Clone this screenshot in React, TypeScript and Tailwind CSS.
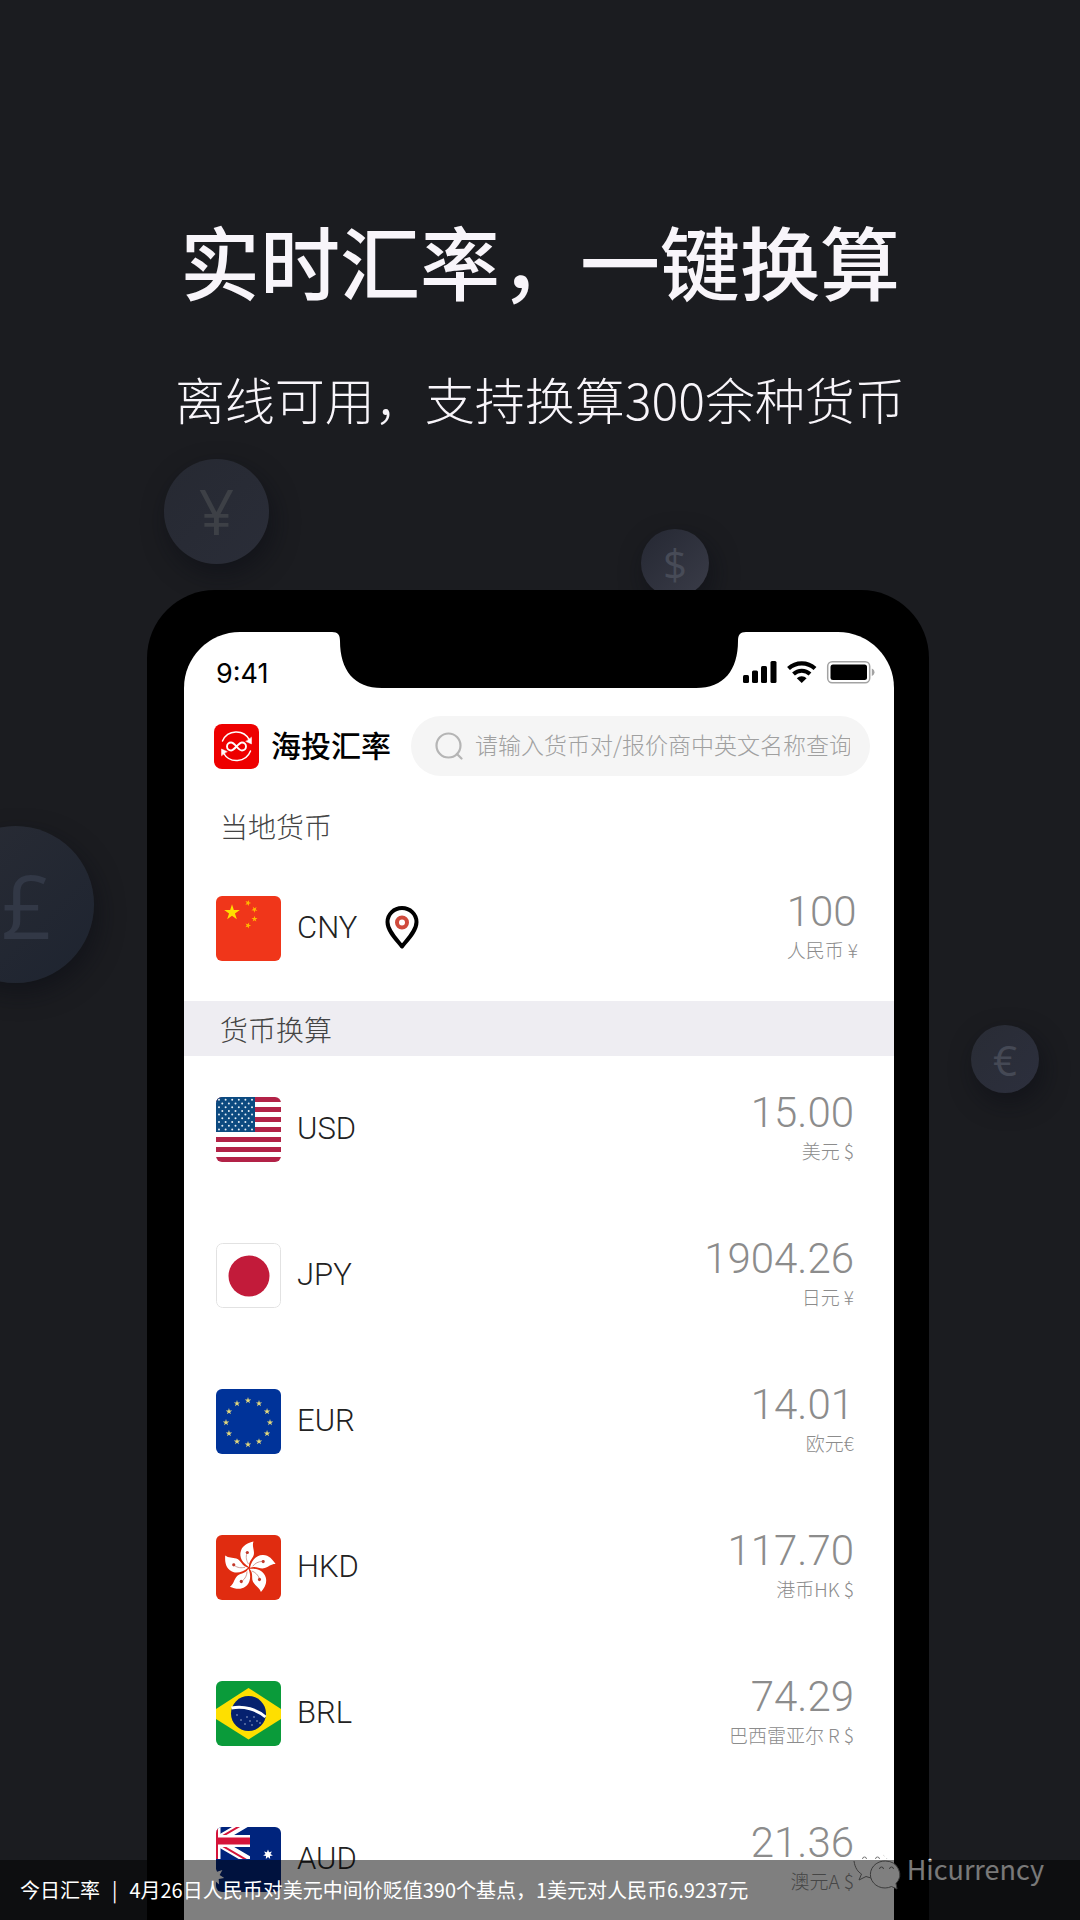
import * as React from "react";
import { clsx } from "clsx";

/**
 * Promo poster for the Hicurrency app: headline, floating coins,
 * and a phone showing the currency converter.
 *
 * Tokens:
 *   ink      #1b1c20  page background
 *   coin     #292c36  floating coins
 *   brand    #ee0000  app logo
 *   value    #8c8c8c  converted amounts
 */

const STAR = "M0 -1 L.225 -.309 L.951 -.309 L.363 .118 L.588 .809 L0 .382 L-.588 .809 L-.363 .118 L-.951 -.309 L-.225 -.309 Z";

function Star({ x, y, r, fill, rotate = 0 }: { x: number; y: number; r: number; fill: string; rotate?: number }) {
  return <path d={STAR} fill={fill} transform={`translate(${x} ${y}) rotate(${rotate}) scale(${r})`} />;
}

/** Seven-pointed star of the Australian flag */
function Star7({ x, y, r }: { x: number; y: number; r: number }) {
  const points = Array.from({ length: 14 }, (_, i) => {
    const a = (Math.PI * i) / 7 - Math.PI / 2;
    const d = i % 2 === 0 ? r : r * 0.5;
    return `${x + d * Math.cos(a)},${y + d * Math.sin(a)}`;
  });
  return <polygon points={points.join(" ")} fill="#fff" />;
}

function FlagCN() {
  return (
    <>
      <rect width="65" height="65" fill="#f0361a" />
      <Star x={16} y={16.5} r={8.2} fill="#ffde00" />
      <Star x={32} y={7} r={3.2} fill="#ffb800" rotate={20} />
      <Star x={38.5} y={13.5} r={3.2} fill="#ffb800" rotate={40} />
      <Star x={38.5} y={23} r={3.2} fill="#ffb800" />
      <Star x={32} y={29.5} r={3.2} fill="#ffb800" rotate={20} />
    </>
  );
}

function FlagUS() {
  return (
    <>
      <rect width="65" height="65" fill="#fff" />
      {[0, 1, 2, 3, 4, 5, 6].map((i) => (
        <rect key={i} y={i * 10} width="65" height="5" fill="#b22247" />
      ))}
      <rect width="39" height="35" fill="#0c4a80" />
      {Array.from({ length: 9 }, (_, row) =>
        Array.from({ length: row % 2 === 0 ? 6 : 5 }, (_, col) => (
          <circle
            key={`${row}-${col}`}
            cx={(row % 2 === 0 ? 3 : 6.3) + col * 6.6}
            cy={2.8 + row * 3.7}
            r="1"
            fill="#e6eef5"
          />
        ))
      )}
    </>
  );
}

function FlagJP() {
  return (
    <>
      <rect x=".5" y=".5" width="64" height="64" rx="6" fill="#fff" stroke="#e2e2e2" />
      <circle cx="33" cy="33" r="20.5" fill="#c21b3a" />
    </>
  );
}

function FlagEU() {
  return (
    <>
      <rect width="65" height="65" fill="#003399" />
      {Array.from({ length: 12 }, (_, i) => {
        const a = (Math.PI * i) / 6;
        return <Star key={i} x={32 + 22 * Math.sin(a)} y={33.5 - 22 * Math.cos(a)} r={3.4} fill="#e3d87c" />;
      })}
    </>
  );
}

function FlagHK() {
  return (
    <>
      <rect width="65" height="65" fill="#e02c10" />
      {[0, 72, 144, 216, 288].map((deg) => (
        <g key={deg} transform={`rotate(${deg} 33 33)`}>
          <path d="M33 32C27 28.500 22.500 22 25 15.500C27 10 32 8 37.500 6.500C36 10.500 38 14 38 18C38 23.500 32.500 25 33 32Z" fill="#fff" />
          <path d="M32.500 29C30.500 26 29.500 22 31 18" fill="none" stroke="#c98f88" strokeWidth=".8" />
          <circle cx="31.300" cy="17.500" r="1.600" fill="#c3392b" />
        </g>
      ))}
    </>
  );
}

function FlagBR() {
  return (
    <>
      <rect width="65" height="65" fill="#0a9b3a" />
      <path d="M0 28 32.500 7 65 28V38L32.500 58.500 0 38Z" fill="#fedf00" />
      <circle cx="32.500" cy="32.500" r="17.500" fill="#05216f" />
      <path d="M15.500 27C28 24.500 41 28.500 49.500 36" fill="none" stroke="#fff" strokeWidth="3" />
      {[[21, 34], [25, 39], [31, 36], [29, 43], [36, 44], [41, 40], [38, 36], [34, 40], [44, 42]].map(([x, y]) => (
        <circle key={`${x}-${y}`} cx={x} cy={y} r=".7" fill="#c5cfe6" />
      ))}
    </>
  );
}

function FlagAU() {
  return (
    <>
      <rect width="65" height="65" fill="#00247d" />
      <clipPath id="au-canton">
        <rect width="34" height="32" />
      </clipPath>
      <g clipPath="url(#au-canton)" fill="none">
        <path d="M0 14 34 -6M0 14 34 34" stroke="#fff" strokeWidth="8" />
        <path d="M0 13 34 -7M0 15 34 35" stroke="#d5143a" strokeWidth="2" />
        <path d="M0 14H34" stroke="#fff" strokeWidth="12" />
        <path d="M2 0V32" stroke="#fff" strokeWidth="5" />
        <path d="M0 14H34" stroke="#d5143a" strokeWidth="7" />
        <path d="M1 0V32" stroke="#d5143a" strokeWidth="2" />
      </g>
      <Star7 x={52} y={27.5} r={5} />
      <Star7 x={-1} y={49} r={9.5} />
    </>
  );
}

interface Currency {
  code: string;
  amount: string;
  /** Name and symbol under the amount */
  unit: string;
  flag: React.ReactNode;
}

const LOCAL: Currency = { code: "CNY", amount: "100", unit: "人民币 ¥", flag: <FlagCN /> };

const CURRENCIES: Currency[] = [
  { code: "USD", amount: "15.00", unit: "美元 $", flag: <FlagUS /> },
  { code: "JPY", amount: "1904.26", unit: "日元 ¥", flag: <FlagJP /> },
  { code: "EUR", amount: "14.01", unit: "欧元€", flag: <FlagEU /> },
  { code: "HKD", amount: "117.70", unit: "港币HK $", flag: <FlagHK /> },
  { code: "BRL", amount: "74.29", unit: "巴西雷亚尔 R $", flag: <FlagBR /> },
  { code: "AUD", amount: "21.36", unit: "澳元A $", flag: <FlagAU /> },
];

function PinIcon() {
  return (
    <svg viewBox="0 0 34 44" className="ml-7 h-11 w-[34px]" fill="none">
      <path d="M17 40.500C12 34 2.500 25 2.500 16a14.500 14 0 0 1 29 0C31.500 25 22 34 17 40.500Z" stroke="#000" strokeWidth="4" strokeLinejoin="round" />
      <circle cx="17" cy="16.500" r="5" stroke="#cf4a3c" strokeWidth="4" />
    </svg>
  );
}

function CurrencyRow({ currency, local = false }: { currency: Currency; local?: boolean }) {
  return (
    <li className={clsx("flex h-[146px] items-center pl-8", local ? "pr-9" : "pr-10")}>
      <svg viewBox="0 0 65 65" className="size-[65px] shrink-0 rounded-md">
        {currency.flag}
      </svg>
      <span className="ml-4 font-['Roboto',sans-serif] text-[31px] font-light text-[#222]">{currency.code}</span>
      {local && <PinIcon />}
      <div className={clsx("ml-auto flex flex-col text-[#8c8c8c]", local ? "items-start" : "items-end")}>
        <span className="font-['Roboto',sans-serif] text-[42px] leading-[44px] font-light">{currency.amount}</span>
        <span className="text-[19px] leading-8 font-light">{currency.unit}</span>
      </div>
    </li>
  );
}

function Coin({ symbol, className }: { symbol: string; className: string }) {
  return (
    <span
      aria-hidden
      className={clsx(
        "absolute flex items-center justify-center rounded-full bg-linear-to-br font-['Open_Sans',sans-serif] font-medium shadow-[4px_10px_24px_rgba(10,12,20,0.5)]",
        className
      )}
    >
      {symbol}
    </span>
  );
}

function Notch() {
  return (
    <svg viewBox="-8 0 414 56" className="absolute top-0 left-[148px] h-14 w-[414px]">
      <path d="M-8 0C-2 0 0 3 0 9C0 38 14 56 42 56H356C384 56 398 38 398 9C398 3 400 0 406 0Z" fill="#000" />
    </svg>
  );
}

function StatusBar() {
  return (
    <div className="flex h-[84px] items-center justify-between pr-[19px] pl-8">
      <span className="font-['Inter',sans-serif] text-[27px] text-black">9:41</span>
      <svg viewBox="0 0 132 24" className="mb-1 h-6 w-[132px]">
        <rect x="0" y="15" width="6" height="8" rx="1.500" />
        <rect x="9" y="10.500" width="6" height="12.500" rx="1.500" />
        <rect x="18" y="6" width="6" height="17" rx="1.500" />
        <rect x="27.500" y="1" width="6" height="22" rx="1.500" />
        <g fill="none" stroke="#000">
          <path d="M45.500 8.500a19.500 19.500 0 0 1 26.500 0" strokeWidth="4.200" />
          <path d="M50.500 14a12 12 0 0 1 16.500 0" strokeWidth="4" />
        </g>
        <path d="M58.700 23 53.800 18.200a7 7 0 0 1 9.800 0Z" />
        <rect x="84.700" y="1.700" width="42" height="21" rx="4.500" fill="none" stroke="#a3a3a3" strokeWidth="1.500" />
        <rect x="87.500" y="4.500" width="36.500" height="15.500" rx="2.500" />
        <path d="M128.800 8.500c3.600 1.500 3.600 6 0 7.500Z" fill="#a3a3a3" />
      </svg>
    </div>
  );
}

function LogoMark() {
  return (
    <svg viewBox="0 0 45 45" className="size-[45px] shrink-0" fill="none" stroke="#fff" strokeWidth="1.500" strokeLinecap="round">
      <rect width="45" height="45" rx="8" fill="#ee0000" stroke="none" />
      <path d="M8.500 17A15 15 0 0 1 35.500 16" />
      <path d="M36.500 27A15 15 0 0 1 9.500 29" />
      <path d="M37.500 13.500V20L32 17.500Z M7.500 31.500V25L13 27.500Z" fill="#fff" strokeWidth=".5" />
      <path
        d="M22.500 22.500C20 19.500 18.500 18.500 17 18.500a4 4 0 0 0 0 8C20.500 26.500 24.500 18.500 28 18.500a4 4 0 0 1 0 8C26.500 26.500 25 25.500 22.500 22.500Z"
        strokeWidth="1.900"
      />
    </svg>
  );
}

function AppHeader() {
  return (
    <header className="flex items-center pr-6 pl-[30px]">
      <LogoMark />
      <h2 className="ml-3 pb-1 text-[30px] leading-[45px] font-medium whitespace-nowrap text-black">海投汇率</h2>
      <label className="ml-5 flex h-[60px] min-w-0 flex-1 items-center rounded-full bg-[#f5f5f5] pl-6">
        <svg viewBox="0 0 28 28" className="size-7 shrink-0" fill="none" stroke="#b5b5b5" strokeWidth="2.200" strokeLinecap="round">
          <circle cx="13.500" cy="13.500" r="12" />
          <path d="m22 22 4.500 4.500" />
        </svg>
        <input
          type="search"
          aria-label="搜索"
          placeholder="请输入货币对/报价商中英文名称查询"
          className="ml-3 min-w-0 flex-1 bg-transparent pb-[3px] text-[23px] font-light outline-none placeholder:text-[#a0a0a0]"
        />
      </label>
    </header>
  );
}

function Phone() {
  return (
    <main className="relative mt-[162px] mr-[151px] ml-[147px] rounded-t-[68px] bg-black pt-[42px] pr-[35px] pl-[37px]">
      <div className="relative rounded-t-[56px] bg-white">
        <Notch />
        <StatusBar />
        <AppHeader />
        <h3 className="flex h-[79px] items-center pt-5 pl-9 text-[28px] font-light text-[#444]">当地货币</h3>
        <ul>
          <CurrencyRow currency={LOCAL} local />
        </ul>
        <h3 className="flex h-[55px] items-center bg-[#eeedf2] pl-9 text-[28px] font-light text-[#444]">货币换算</h3>
        <ul>
          {CURRENCIES.map((currency) => (
            <CurrencyRow key={currency.code} currency={currency} />
          ))}
        </ul>
      </div>
    </main>
  );
}

function Watermark() {
  return (
    <div className="absolute right-9 bottom-7 flex items-center gap-1.5 text-[27px] leading-10 text-[#f2f2f2]">
      <svg viewBox="0 0 48 38" className="mt-2 h-[38px] w-12" fill="none" stroke="#777" strokeWidth="1">
        <path d="M1 7C2 14 5 18 8.500 20L6 26 13 22.500 18 24" />
        <path d="M34 5A21 18 0 0 0 30 1" strokeDasharray="1 3" stroke="#bbb" />
        <path d="M32.500 7a14.500 13.500 0 1 0 6 25.500L44 35 43 29.500A14.500 13.500 0 0 0 32.500 7Z" fill="#fff" />
        <path d="M9.500 5a2 2 0 0 1 4 0M22.500 5a2 2 0 0 1 4 0M26.500 15a2 2 0 0 1 4 0M36.500 15a2 2 0 0 1 4 0" />
      </svg>
      Hicurrency
    </div>
  );
}

export default function App() {
  return (
    <div className="relative h-screen overflow-hidden bg-[#1b1c20] font-['Noto_Sans_CJK_SC',sans-serif]">
      <section className="pt-[219px] text-center text-[#f8f5fa]">
        <h1 className="text-[80px] leading-[80px] font-medium">实时汇率，一键换算</h1>
        <p className="mt-[69px] text-[50px] leading-[60px] font-light">离线可用，支持换算300余种货币</p>
      </section>

      <Coin symbol="¥" className="top-[459px] left-[164px] size-[105px] from-[#262932] to-[#2a2d38] text-[62px] text-[#3d4046]" />
      <Coin symbol="$" className="top-[529px] left-[641px] size-[68px] from-[#252833] to-[#3a3c48] text-[42px] text-[#474b57]" />
      <Coin symbol="£" className="top-[826px] left-[-63px] size-[157px] from-[#292c35] to-[#1e2430] pl-[22px] text-[88px] text-[#323846]" />
      <Coin symbol="€" className="top-[1025px] right-[41px] size-[68px] from-[#292c35] to-[#2c2f3d] text-[42px] text-[#454955]" />

      <Phone />
      <Watermark />

      <footer className="absolute inset-x-0 bottom-0 flex h-[60px] items-center gap-3 bg-black/50 px-5 text-[20px] whitespace-nowrap text-white">
        <span>今日汇率</span>
        <span>|</span>
        <span>4月26日人民币对美元中间价贬值390个基点，1美元对人民币6.9237元</span>
      </footer>
    </div>
  );
}
